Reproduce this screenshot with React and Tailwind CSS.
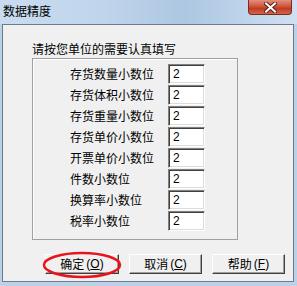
import React from "react";

const rows = [
  "存货数量小数位",
  "存货体积小数位",
  "存货重量小数位",
  "存货单价小数位",
  "开票单价小数位",
  "件数小数位",
  "换算率小数位",
  "税率小数位",
];

const cjk = { fontFamily: '"Noto Sans CJK SC", "Liberation Sans", sans-serif' };

function Btn({ label, acc, w }) {
  return (
    <div className={`${w} h-[20px] flex items-center justify-center border-t border-l border-t-white border-l-white border-b border-r border-b-[#404040] border-r-[#404040] shadow-[inset_-1px_-1px_0_#a0a0a0] bg-[#f0f0f0] text-[12px] leading-[14px] text-black`}>
      <span style={cjk}>{label}</span>
      <span className="ml-[2px]" style={{ fontFamily: '"Liberation Sans", sans-serif' }}>
        (<span className="underline">{acc}</span>)
      </span>
    </div>
  );
}

export default function App() {
  return (
    <div className="relative w-[297px] h-[286px] bg-[#bad1e9] flex flex-col overflow-hidden">
      {/* title bar */}
      <div className="h-[24px] flex justify-between bg-[linear-gradient(90deg,#c9dcef_0%,#c0d5ec_35%,#adc6e1_62%,#bcd2ea_80%,#cfe0f1_100%)]">
        <div className="pl-[3px] pt-[4px] text-[12px] leading-[14px] text-black" style={cjk}>
          数据精度
        </div>
        <div className="mr-[5px] w-[44px] h-[15px] rounded-b-[4px] border border-t-0 border-[#7a2a20] bg-[linear-gradient(180deg,#e0917f_0%,#d0553d_45%,#c13b22_60%,#d2664c_100%)] flex items-center justify-center">
          <svg width="13" height="11" viewBox="0 0 13 11">
            <path d="M2 1.5 L11 9.5 M11 1.5 L2 9.5" stroke="#5a2018" strokeWidth="4" strokeLinecap="square" />
            <path d="M2 1.5 L11 9.5 M11 1.5 L2 9.5" stroke="#ffffff" strokeWidth="2" strokeLinecap="square" />
          </svg>
        </div>
      </div>

      {/* client area */}
      <div className="ml-[2px] w-[292px] h-[258px] border border-[#6e7b8a] bg-[#f0f0f0] flex flex-col">
        <div className="ml-[29px] mt-[17px] text-[12px] leading-[14px] text-black" style={cjk}>
          请按您单位的需要认真填写
        </div>
        <div className="ml-[29px] mt-[2px] w-[206px] h-[182px] border border-[#a0a0a0] shadow-[inset_1px_1px_0_#ffffff] pt-[5px] pl-[37px] flex flex-col gap-[1px]">
          {rows.map((r) => (
            <div key={r} className="flex items-center h-[20px]">
              <div className="w-[98px] text-[12px] leading-[14px] text-black" style={cjk}>
                {r}
              </div>
              <div
                className="w-[37px] h-[20px] bg-white border-t border-l border-t-[#808080] border-l-[#808080] border-b border-r border-b-white border-r-white shadow-[inset_1px_1px_0_#404040,inset_-1px_-1px_0_#dcdcdc] pl-[4px] flex items-center text-[12px] leading-[14px] text-black"
                style={{ fontFamily: '"Liberation Sans", sans-serif' }}
              >
                2
              </div>
            </div>
          ))}
        </div>
        <div className="ml-[42px] mt-[14px] flex gap-[10px]">
          <Btn label="确定" acc="O" w="w-[74px]" />
          <Btn label="取消" acc="C" w="w-[73px]" />
          <Btn label="帮助" acc="F" w="w-[73px]" />
        </div>
      </div>

      {/* red annotation ellipse */}
      <svg className="absolute left-[42px] top-[251px] pointer-events-none" width="80" height="28" viewBox="0 0 80 28">
        <ellipse cx="40" cy="14" rx="38" ry="12" fill="none" stroke="#e8141c" strokeWidth="2.5" />
      </svg>
    </div>
  );
}
